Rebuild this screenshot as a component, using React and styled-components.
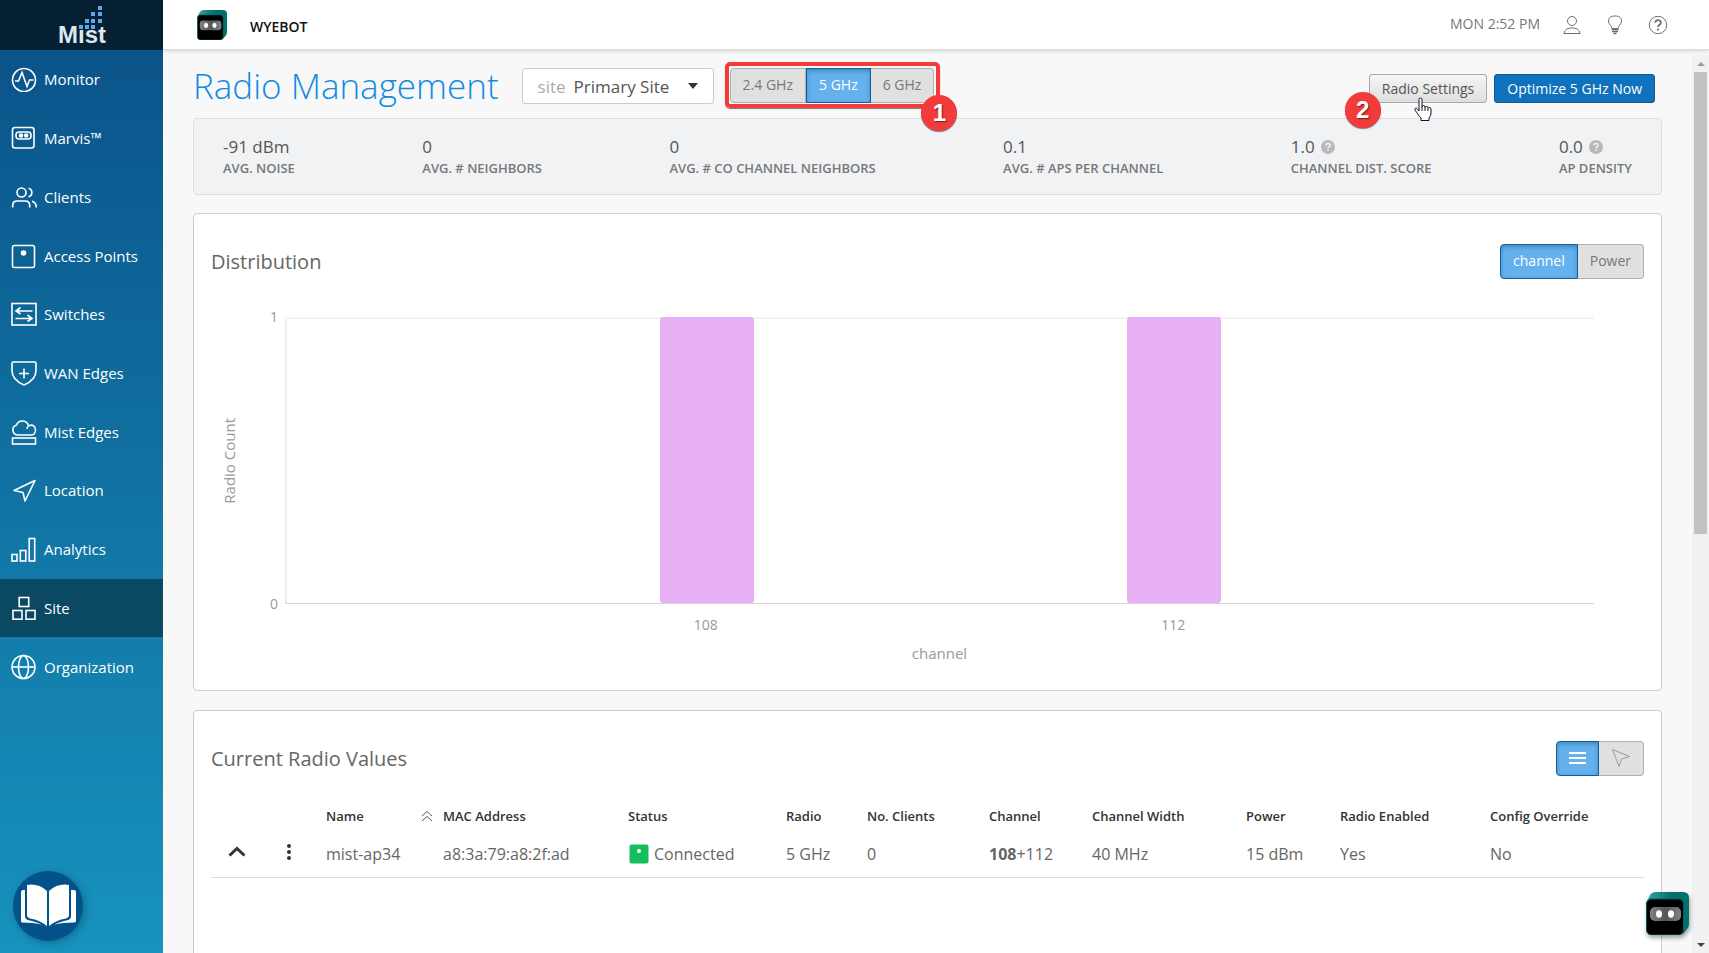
import React, { useState } from 'react';
import styled, { createGlobalStyle, css } from 'styled-components';

const GlobalStyle = createGlobalStyle`
  * {
    box-sizing: border-box;
  }

  body {
    margin: 0;
    font-family: 'Open Sans', 'Noto Sans', sans-serif;
    font-size: 16px;
    color: #666;
    background: #f8f8f8;
    overflow: hidden;
  }

  button,
  select {
    font-family: inherit;
    margin: 0;
  }
`;

const Layout = styled.div`
  display: flex;
  height: 100vh;
`;

/* sidebar */

const Sidebar = styled.aside`
  display: flex;
  flex-direction: column;
  flex: none;
  width: 163px;
  background: linear-gradient(#0a5087, #1793bd);
`;

const Brand = styled.div`
  display: flex;
  justify-content: center;
  height: 50px;
  background: #051f33;
`;

const Nav = styled.nav`
  display: grid;
  grid-auto-rows: 1fr;
  height: 646px;
`;

const NavItem = styled.a`
  display: flex;
  align-items: center;
  gap: 7px;
  padding-left: 11px;
  color: #fff;
  font-size: 15px;
  font-weight: 500;
  text-decoration: none;
  background: ${props => (props.$active ? '#0b4862' : 'transparent')};
`;

const NavIcon = styled.svg`
  flex: none;
  width: 26px;
  height: 26px;
  fill: none;
  stroke: #fff;
  stroke-width: 1.6;
`;

const GuideButton = styled.button`
  position: fixed;
  left: 13px;
  bottom: 12px;
  width: 70px;
  height: 70px;
  padding: 0;
  border: 0;
  border-radius: 50%;
  background: #035289;
  box-shadow: 2px 2px 8px rgba(0, 0, 0, 0.25);
`;

/* top bar */

const Main = styled.div`
  display: flex;
  flex-direction: column;
  flex: 1;
  min-width: 0;
`;

const TopBar = styled.header`
  display: flex;
  align-items: center;
  flex: none;
  height: 50px;
  padding: 0 40px 0 34px;
  background: #fff;
  border-bottom: 1px solid #dcdcdc;
  box-shadow: 0 1px 4px rgba(0, 0, 0, 0.15);
  z-index: 1;
`;

const OrgName = styled.span`
  margin-left: 23px;
  padding-top: 4px;
  font-size: 14px;
  font-weight: 600;
  color: #111;
`;

const Clock = styled.span`
  margin-left: auto;
  margin-right: 21px;
  padding-bottom: 2px;
  font-size: 14px;
  color: #777;
`;

const TopIcons = styled.div`
  display: flex;
  gap: 21px;
`;

const IconButton = styled.button`
  display: flex;
  padding: 0;
  border: 0;
  background: none;
  color: #707070;
`;

const Body = styled.div`
  display: flex;
  flex: 1;
  min-height: 0;
`;

const Content = styled.main`
  flex: 1;
  min-width: 0;
  padding: 18px 30px 0;
  overflow: hidden;
`;

/* page toolbar */

const Toolbar = styled.div`
  display: flex;
  align-items: flex-start;
  height: 35px;
  margin-bottom: 15px;
`;

const Title = styled.h1`
  margin: 0 23px 0 0;
  font-size: 35px;
  font-weight: 300;
  line-height: 36px;
  color: #118be0;
  white-space: nowrap;
`;

const SitePicker = styled.label`
  display: flex;
  align-items: center;
  position: relative;
  height: 36px;
  margin-right: 16px;
  padding-left: 15px;
  border: 1px solid #ccc;
  border-radius: 3px;
  background: #fff;
  font-size: 17px;
  color: #aaa;

  svg {
    position: absolute;
    right: 15px;
    pointer-events: none;
  }
`;

const SiteSelect = styled.select`
  height: 34px;
  padding: 0 43px 0 8px;
  border: 0;
  appearance: none;
  background: none;
  font-size: 17px;
  color: #555;
`;

const Toggle = styled.div`
  display: flex;
  position: relative;
`;

const ToggleButton = styled.button`
  display: flex;
  align-items: center;
  height: 35px;
  padding: 0 12px 2px;
  border: 1px solid #b0b0b0;
  border-left-width: ${props => (props.$first ? '1px' : '0')};
  background: #e0e0e0;
  color: #777;
  font-size: 14px;

  &:first-of-type {
    border-radius: 4px 0 0 4px;
  }

  &:last-of-type {
    border-radius: 0 4px 4px 0;
  }

  ${props =>
    props.$active &&
    css`
      border: 1px solid #0f5f9c;
      background: #64b1ed;
      color: #fff;
      box-shadow: inset 0 2px 4px rgba(0, 60, 110, 0.35);
    `}
`;

const Highlight = styled.div`
  position: absolute;
  inset: -6px -6px -5px -5px;
  border: 4px solid #f33b3b;
  border-radius: 5px;
  box-shadow: 0 1px 1px rgba(0, 0, 0, 0.5);
  pointer-events: none;
`;

const Step = styled.span`
  position: absolute;
  top: ${props => props.$top}px;
  left: ${props => props.$left};
  width: 36px;
  height: 36px;
  border-radius: 50%;
  background: #f33b3b;
  box-shadow: 0 1px 1px rgba(0, 0, 0, 0.5);
  color: #fff;
  font: bold 24px/36px 'Liberation Sans', sans-serif;
  text-align: center;
  text-shadow: 1px 1px 1px rgba(0, 0, 0, 0.5);
`;

const Actions = styled.div`
  display: flex;
  align-self: flex-end;
  gap: 7px;
  position: relative;
  margin-left: auto;
  margin-right: 7px;
`;

const ActionButton = styled.button`
  height: 29px;
  padding: 0 12px 1px;
  border: 1px solid ${props => (props.$primary ? '#0b5a99' : '#aaa')};
  border-radius: 3px;
  background: ${props => (props.$primary ? '#1072bc' : 'linear-gradient(#f6f6f6, #dedede)')};
  color: ${props => (props.$primary ? '#fff' : '#555')};
  font-size: 14px;
`;

const Pointer = styled.svg`
  position: absolute;
  top: 23px;
  left: 44px;
`;

/* stats */

const Stats = styled.dl`
  display: flex;
  justify-content: space-between;
  height: 77px;
  margin: 0 0 18px;
  padding: 17px 29px 0;
  border: 1px solid #dcdfe2;
  border-radius: 4px;
  background: #f0f2f4;
`;

const Stat = styled.div`
  display: flex;
  flex-direction: column-reverse;
  justify-content: flex-end;
`;

const StatValue = styled.dd`
  display: flex;
  align-items: center;
  gap: 6px;
  margin: 0;
  font-size: 17px;
  line-height: 22px;
  color: #555;
`;

const StatLabel = styled.dt`
  font-size: 13px;
  font-weight: 600;
  line-height: 20px;
  color: #777;
`;

/* cards */

const Card = styled.section`
  margin-bottom: 19px;
  padding: 30px 17px 0;
  border: 1px solid #ccc;
  border-radius: 4px;
  background: #fff;
`;

const CardHeader = styled.div`
  display: flex;
  align-items: center;
  justify-content: space-between;
  height: 35px;
`;

const CardTitle = styled.h2`
  margin: 0;
  font-size: 20px;
  font-weight: 400;
  color: #666;
`;

const Chart = styled.figure`
  display: grid;
  grid-template-columns: 36px 38px 1fr;
  grid-template-rows: 287px 41px 16px;
  margin: 38px 50px 29px 0;
  font-size: 14px;
  line-height: 16px;
  color: #999;
`;

const YTitle = styled.span`
  writing-mode: vertical-rl;
  transform: rotate(180deg);
  justify-self: center;
  align-self: center;
  font-size: 15px;
`;

const YTicks = styled.div`
  display: flex;
  flex-direction: column;
  justify-content: space-between;
  margin: -8px 7px -8px 0;
  text-align: right;
`;

const Plot = styled.div`
  display: flex;
  align-items: flex-end;
  justify-content: space-evenly;
  border-top: 2px solid #f2f2f2;
  border-left: 2px solid #ececec;
  border-bottom: 1px solid #d4d4d4;
`;

const Bar = styled.div`
  width: calc(100% / 14);
  margin-top: -2px;
  border-radius: 3px;
  background: #e8b0f4;
`;

const XTicks = styled.div`
  display: flex;
  justify-content: space-evenly;
  grid-column: 3;
  padding-top: 13px;

  span {
    width: calc(100% / 14);
    text-align: center;
  }
`;

const XTitle = styled.figcaption`
  grid-column: 3;
  font-size: 15px;
  text-align: center;
`;

/* table */

const Table = styled.table`
  width: 100%;
  margin: 21px 0 100px;
  border-collapse: collapse;
  table-layout: fixed;
  text-align: left;
  white-space: nowrap;
`;

const Th = styled.th`
  height: 37px;
  padding: 0 0 0 10px;
  font-size: 13px;
  font-weight: 600;
  color: #333;
`;

const ThInner = styled.div`
  display: flex;
  align-items: center;
  justify-content: space-between;
`;

const Td = styled.td`
  height: 43px;
  padding: ${props => (props.$icon ? '0 0 2px' : '0 0 2px 10px')};
  border-bottom: 1px solid #ddd;
  font-size: 16px;
  color: #666;
  text-align: ${props => (props.$icon ? 'center' : 'left')};
`;

const RowButton = styled.button`
  padding: 0;
  border: 0;
  background: none;

  svg {
    display: block;
  }
`;

const Status = styled.span`
  display: flex;
  align-items: center;
  gap: 5px;
`;

/* scroll bar */

const ScrollBar = styled.div`
  display: flex;
  flex-direction: column;
  flex: none;
  width: 17px;
  margin-top: 5px;
  background: #f1f1f1;
`;

const ScrollArrow = styled.div`
  display: flex;
  align-items: center;
  justify-content: center;
  height: 17px;
`;

const ScrollTrack = styled.div`
  flex: 1;
  padding: 0 2px;
`;

const ScrollThumb = styled.div`
  height: 53.5%;
  background: #c1c1c1;
`;

const AssistantButton = styled.button`
  position: fixed;
  right: 20px;
  bottom: 18px;
  padding: 0;
  border: 0;
  background: none;
  filter: drop-shadow(1px 3px 2px rgba(0, 0, 0, 0.35));

  svg {
    display: block;
  }
`;

const navItems = [
  {
    label: 'Monitor',
    icon: (
      <>
        <circle cx="13" cy="14" r="11.500" />
        <path d="M4 15h3.500l3.500-8.500 5 14 2.500-6.500h4" />
      </>
    )
  },
  {
    label: 'Marvis™',
    icon: (
      <>
        <rect x="1.500" y="2.500" width="21.500" height="20.500" rx="2.500" />
        <rect x="5" y="7" width="15" height="7" rx="3" />
        <circle cx="10" cy="10.500" r="1.500" fill="#fff" />
        <circle cx="15.200" cy="10.500" r="1.500" fill="#fff" />
      </>
    )
  },
  {
    label: 'Clients',
    icon: (
      <>
        <circle cx="10.500" cy="8.500" r="4.500" />
        <path d="M1.700 23.500v-2c0-3 2-4.500 4.500-4.500h8c2.500 0 4.500 1.500 4.500 4.500v2M17.500 4.200c4.500 1 4.500 7.600 0 8.600M21 17.200c3 .8 4.300 2.600 4.300 6.300" />
      </>
    )
  },
  {
    label: 'Access Points',
    icon: (
      <>
        <rect x="1.500" y="2.500" width="22" height="22" rx="2" />
        <circle cx="12.500" cy="10" r="2" fill="#fff" />
      </>
    )
  },
  {
    label: 'Switches',
    icon: (
      <>
        <rect x="1" y="2.500" width="24" height="21.500" />
        <path d="M21.500 10h-16M9.500 6.500L5 10l4.500 3M4.500 17.500h16M16.500 14l4.500 3.500-4.500 3" />
      </>
    )
  },
  {
    label: 'WAN Edges',
    icon: <path d="M2.500 2h21q1.500 0 1.500 1.500v7c0 7-5 11.500-12 14.500-7-3-12-7.500-12-14.500v-7Q1 2 2.500 2zM13 8.500v10M8 13.500h10" />
  },
  {
    label: 'Mist Edges',
    icon: (
      <>
        <path d="M6.500 16C.5 15 .5 7.500 5.500 6 7.500.500 16 .500 17.500 7c4.500-2.500 7 1 7 4 0 3-2 5-4.500 5H6.500M17.500 7c-1 .8-1.500 1.500-1.500 3" />
        <rect x="1.500" y="19" width="23" height="6" />
      </>
    )
  },
  {
    label: 'Location',
    icon: <path d="M3 13.500L24 3.500 14 24 12 15.500z" strokeLinejoin="round" />
  },
  {
    label: 'Analytics',
    icon: (
      <>
        <rect x="1" y="18.500" width="5" height="6.500" />
        <rect x="9.300" y="14.500" width="5.500" height="10.500" />
        <rect x="18.200" y="2.500" width="5.500" height="22.500" />
      </>
    )
  },
  {
    label: 'Site',
    icon: (
      <>
        <rect x="8.200" y="2.500" width="9.500" height="9" />
        <rect x="2" y="15.500" width="9" height="8.700" />
        <rect x="15" y="15.500" width="9" height="8.700" />
      </>
    )
  },
  {
    label: 'Organization',
    icon: (
      <>
        <circle cx="12.500" cy="13" r="11.500" />
        <ellipse cx="12.500" cy="13" rx="5" ry="11.500" />
        <path d="M1 13h23" />
      </>
    )
  }
];

const stats = [
  { value: '-91 dBm', label: 'AVG. NOISE' },
  { value: '0', label: 'AVG. # NEIGHBORS' },
  { value: '0', label: 'AVG. # CO CHANNEL NEIGHBORS' },
  { value: '0.1', label: 'AVG. # APS PER CHANNEL' },
  { value: '1.0', label: 'CHANNEL DIST. SCORE', help: true },
  { value: '0.0', label: 'AP DENSITY', help: true }
];

const channels = [
  { name: '108', count: 1 },
  { name: '112', count: 1 }
];

const columnWidths = [51, 54, 117, 185, 158, 81, 122, 103, 154, 94, 150, 164];

const MarvisCube = ({ size }) => (
  <svg width={size} height={size} viewBox="0 0 43 43">
    <defs>
      <linearGradient id="cube" x1="0" y1="0" x2="1" y2="0">
        <stop offset="0.1" stopColor="#2a9d9b" />
        <stop offset="0.6" stopColor="#03706c" />
      </linearGradient>
      <linearGradient id="visor" x1="0" y1="0" x2="1" y2="0">
        <stop offset="0" stopColor="#828282" />
        <stop offset="0.5" stopColor="#555" />
        <stop offset="1" stopColor="#828282" />
      </linearGradient>
    </defs>
    <path d="M0 11L4 3Q6 0 10 0h27q6 0 6 6v26q0 3-2 5l-4 5z" fill="url(#cube)" />
    <rect x="0.500" y="7" width="37" height="36" rx="5" fill="#000" stroke="#075b5d" />
    <rect x="4" y="15" width="31" height="14" rx="5" fill="url(#visor)" />
    <ellipse cx="13" cy="22" rx="3" ry="3.700" fill="#fff" />
    <ellipse cx="25" cy="22" rx="3" ry="3.700" fill="#fff" />
  </svg>
);

const HelpDot = () => (
  <svg width="14" height="14" viewBox="0 0 14 14">
    <circle cx="7" cy="7" r="7" fill="#b9b9b9" />
    <path d="M5 5.500c0-2.600 4-2.600 4 0 0 1.500-2 1.300-2 2.800M7 9.500v1.500" fill="none" stroke="#f4f4f4" strokeWidth="1.500" />
  </svg>
);

function App() {
  const [band, setBand] = useState('5 GHz');
  const [metric, setMetric] = useState('channel');

  return (
    <>
      <GlobalStyle />
      <Layout>
        <Sidebar>
          <Brand>
            <svg width="50" height="50" viewBox="57 0 50 50">
              <text x="58" y="43" fill="#dfe6ee" fontFamily="Liberation Sans, sans-serif" fontWeight="bold" fontSize="24">
                Mıst
              </text>
              <path
                fill="#5fa8e6"
                d="M79 25h4v4h-4zM85 25h4v4h-4zM91 25h4v4h-4zM85 19h4v4h-4zM91 19h4v4h-4zM98 19h4v4h-4zM91 12h4v4h-4zM98 12h4v4h-4zM98 6h4v4h-4z"
              />
            </svg>
          </Brand>
          <Nav>
            {navItems.map(item => (
              <NavItem key={item.label} href="#" $active={item.label === 'Site'}>
                <NavIcon viewBox="0 0 26 26">{item.icon}</NavIcon>
                {item.label}
              </NavItem>
            ))}
          </Nav>
        </Sidebar>

        <Main>
          <TopBar>
            <MarvisCube size={30} />
            <OrgName>WYEBOT</OrgName>
            <Clock>MON 2:52 PM</Clock>
            <TopIcons>
              <IconButton aria-label="Account">
                <svg width="22" height="22" viewBox="0 0 22 22" fill="none" stroke="currentColor">
                  <circle cx="11" cy="7" r="4.500" />
                  <path d="M3 19.500c0-7.500 16-7.500 16 0z" strokeLinejoin="round" />
                </svg>
              </IconButton>
              <IconButton aria-label="Tips">
                <svg width="22" height="22" viewBox="0 0 22 22" fill="none" stroke="currentColor">
                  <path d="M8 14.500c0-3-3.500-3.500-3.500-7.500C4.500 3.500 7 2 11 2s6.500 1.500 6.500 5c0 4-3.500 4.500-3.500 7.500z" />
                  <path d="M7.500 15.500h7M8 17.500h6M9.500 19.500h3" strokeWidth="1.500" />
                </svg>
              </IconButton>
              <IconButton aria-label="Help">
                <svg width="22" height="22" viewBox="0 0 22 22" fill="none" stroke="currentColor">
                  <circle cx="11" cy="11" r="8.700" />
                  <path d="M8.300 8.800c0-3.700 5.600-3.700 5.600 0 0 2.200-2.800 1.900-2.800 4.200M11.100 14.500v2" strokeWidth="1.800" />
                </svg>
              </IconButton>
            </TopIcons>
          </TopBar>

          <Body>
            <Content>
              <Toolbar>
                <Title>Radio Management</Title>
                <SitePicker>
                  site
                  <SiteSelect defaultValue="Primary Site">
                    <option>Primary Site</option>
                  </SiteSelect>
                  <svg width="10" height="6" viewBox="0 0 10 6">
                    <path d="M0 0h10L5 6z" fill="#333" />
                  </svg>
                </SitePicker>
                <Toggle>
                  {['2.4 GHz', '5 GHz', '6 GHz'].map((name, i) => (
                    <ToggleButton key={name} $first={i === 0} $active={band === name} onClick={() => setBand(name)}>
                      {name}
                    </ToggleButton>
                  ))}
                  <Highlight />
                  <Step $top={27} $left="calc(100% - 13px)">
                    1
                  </Step>
                </Toggle>
                <Actions>
                  <ActionButton>Radio Settings</ActionButton>
                  <ActionButton $primary>Optimize 5 GHz Now</ActionButton>
                  <Step $top={18} $left="-24px">
                    2
                  </Step>
                  <Pointer width="20" height="25" viewBox="0 0 20 25">
                    <path
                      d="M6 2.500q0-1.500 1.500-1.500T9 2.500V10q0-1.500 1.500-1.500T12 10v.8q0-1.300 1.500-1.300T15 11v.6q0-1.100 1.400-1.100T18 12v4q0 3-2 5v2.500H8V21c-2-2-4-5-6-8-.8-1.500 1-2.500 2-1.500l2 2.500z"
                      fill="#fff"
                      stroke="#15152a"
                    />
                    <path d="M9 10v4M12 11v3M15 12v2" stroke="#15152a" />
                  </Pointer>
                </Actions>
              </Toolbar>

              <Stats>
                {stats.map(stat => (
                  <Stat key={stat.label}>
                    <StatLabel>{stat.label}</StatLabel>
                    <StatValue>
                      {stat.value}
                      {stat.help && <HelpDot />}
                    </StatValue>
                  </Stat>
                ))}
              </Stats>

              <Card>
                <CardHeader>
                  <CardTitle>Distribution</CardTitle>
                  <Toggle>
                    {['channel', 'Power'].map((name, i) => (
                      <ToggleButton key={name} $first={i === 0} $active={metric === name} onClick={() => setMetric(name)}>
                        {name}
                      </ToggleButton>
                    ))}
                  </Toggle>
                </CardHeader>
                <Chart>
                  <YTitle>Radio Count</YTitle>
                  <YTicks>
                    <span>1</span>
                    <span>0</span>
                  </YTicks>
                  <Plot>
                    {channels.map(channel => (
                      <Bar key={channel.name} style={{ height: `calc(${channel.count * 100}% + 2px)` }} />
                    ))}
                  </Plot>
                  <XTicks>
                    {channels.map(channel => (
                      <span key={channel.name}>{channel.name}</span>
                    ))}
                  </XTicks>
                  <XTitle>channel</XTitle>
                </Chart>
              </Card>

              <Card>
                <CardHeader>
                  <CardTitle>Current Radio Values</CardTitle>
                  <Toggle>
                    <ToggleButton $first $active aria-label="List view">
                      <svg width="17" height="14" viewBox="0 0 17 14" stroke="#fff" strokeWidth="2">
                        <path d="M0 2h17M0 7h17M0 12h17" />
                      </svg>
                    </ToggleButton>
                    <ToggleButton aria-label="Map view">
                      <svg width="20" height="20" viewBox="0 0 20 20" fill="none" stroke="#999">
                        <path d="M1.500 1.500l17 7-8 2.500-2.500 7.500z" strokeLinejoin="round" />
                      </svg>
                    </ToggleButton>
                  </Toggle>
                </CardHeader>
                <Table>
                  <colgroup>
                    {columnWidths.map((width, i) => (
                      <col key={i} width={width} />
                    ))}
                  </colgroup>
                  <thead>
                    <tr>
                      <Th />
                      <Th />
                      <Th>
                        <ThInner>
                          Name
                          <svg width="12" height="12" viewBox="0 0 12 12" fill="none" stroke="#555">
                            <path d="M1 6l5-4.500L11 6M1 11l5-4.500 5 4.500" />
                          </svg>
                        </ThInner>
                      </Th>
                      <Th>MAC Address</Th>
                      <Th>Status</Th>
                      <Th>Radio</Th>
                      <Th>No. Clients</Th>
                      <Th>Channel</Th>
                      <Th>Channel Width</Th>
                      <Th>Power</Th>
                      <Th>Radio Enabled</Th>
                      <Th>Config Override</Th>
                    </tr>
                  </thead>
                  <tbody>
                    <tr>
                      <Td $icon>
                        <RowButton aria-label="Collapse row">
                          <svg width="18" height="14" viewBox="0 0 18 14" fill="none" stroke="#333" strokeWidth="3">
                            <path d="M1.500 9.500L9 2.500l7.500 7" />
                          </svg>
                        </RowButton>
                      </Td>
                      <Td $icon>
                        <RowButton aria-label="Row menu">
                          <svg width="4" height="16" viewBox="0 0 4 16" fill="#333">
                            <circle cx="2" cy="2" r="2" />
                            <circle cx="2" cy="8" r="2" />
                            <circle cx="2" cy="14" r="2" />
                          </svg>
                        </RowButton>
                      </Td>
                      <Td>mist-ap34</Td>
                      <Td>a8:3a:79:a8:2f:ad</Td>
                      <Td>
                        <Status>
                          <svg width="21" height="20" viewBox="0 0 21 20">
                            <rect x="1.500" y="0.500" width="19" height="19" rx="2" fill="#15bd5e" />
                            <circle cx="11" cy="7" r="2" fill="#fff" />
                          </svg>
                          Connected
                        </Status>
                      </Td>
                      <Td>5 GHz</Td>
                      <Td>0</Td>
                      <Td>
                        <b>108</b>+112
                      </Td>
                      <Td>40 MHz</Td>
                      <Td>15 dBm</Td>
                      <Td>Yes</Td>
                      <Td>No</Td>
                    </tr>
                  </tbody>
                </Table>
              </Card>
            </Content>

            <ScrollBar>
              <ScrollArrow>
                <svg width="8" height="4" viewBox="0 0 8 4">
                  <path d="M0 4h8L4 0z" fill="#999" />
                </svg>
              </ScrollArrow>
              <ScrollTrack>
                <ScrollThumb />
              </ScrollTrack>
              <ScrollArrow>
                <svg width="8" height="4" viewBox="0 0 8 4">
                  <path d="M0 0h8L4 4z" fill="#444" />
                </svg>
              </ScrollArrow>
            </ScrollBar>
          </Body>
        </Main>
      </Layout>

      <GuideButton aria-label="Guide">
        <svg width="70" height="70" viewBox="0 0 70 70" fill="#fff">
          <path d="M14 14q11-2 20 6v35q-7-6-17-7.500-3-.8-3-3zM56 14q-11-2-20 6v35q7-6 17-7.500 3-.8 3-3z" />
          <path d="M12 19v26q0 3 3 4 8 1.500 14 4.500-8-2-20-2Q8 51.500 8 50V21q0-2 2-2zM58 19v26q0 3-3 4-8 1.500-14 4.500 8-2 20-2 2 0 2-1.500V21q0-2-2-2z" />
        </svg>
      </GuideButton>
      <AssistantButton aria-label="Marvis">
        <MarvisCube size={43} />
      </AssistantButton>
    </>
  );
}

export default App;
